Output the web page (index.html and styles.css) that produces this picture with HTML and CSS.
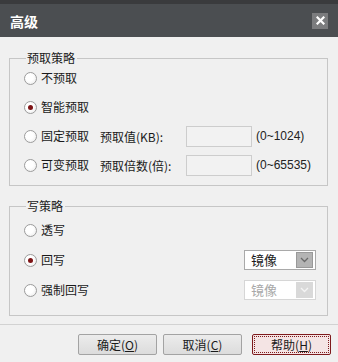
FILE: index.html
```html
<!DOCTYPE html>
<html>
<head>
<meta charset="utf-8">
<link rel="stylesheet" href="styles.css">
</head>
<body>
<div class="dialog">
  <div class="topstrip"></div>
  <div class="titlebar">
    <span class="title">高级</span>
    <span class="close"><svg width="9" height="9" viewBox="0 0 9 9"><path d="M1.5 1.5 L7.5 7.5 M7.5 1.5 L1.5 7.5" stroke="#fff" stroke-width="2.2" stroke-linecap="square"/></svg></span>
  </div>
  <div class="content">
    <fieldset class="group g1">
      <legend>预取策略</legend>
      <div class="row"><span class="radio"></span><span class="lbl">不预取</span></div>
      <div class="row"><span class="radio checked"></span><span class="lbl">智能预取</span></div>
      <div class="row"><span class="radio"></span><span class="lbl">固定预取</span><span class="field">预取值(KB):</span><span class="input"></span><span class="range">(0~1024)</span></div>
      <div class="row"><span class="radio"></span><span class="lbl">可变预取</span><span class="field">预取倍数(倍):</span><span class="input"></span><span class="range">(0~65535)</span></div>
    </fieldset>
    <fieldset class="group g2">
      <legend>写策略</legend>
      <div class="row"><span class="radio"></span><span class="lbl">透写</span></div>
      <div class="row"><span class="radio checked"></span><span class="lbl">回写</span><span class="select"><span class="stext">镜像</span><span class="arrow"><svg width="9" height="6" viewBox="0 0 9 6"><path d="M1 1 L4.5 4.5 L8 1" fill="none" stroke="#6a6a6a" stroke-width="1.3"/></svg></span></span></div>
      <div class="row"><span class="radio"></span><span class="lbl">强制回写</span><span class="select disabled"><span class="stext">镜像</span><span class="arrow"><svg width="9" height="6" viewBox="0 0 9 6"><path d="M1 1 L4.5 4.5 L8 1" fill="none" stroke="#f4f4f4" stroke-width="1.3"/></svg></span></span></div>
    </fieldset>
  </div>
  <div class="footer">
    <span class="btn">确定(<u>O</u>)</span>
    <span class="btn">取消(<u>C</u>)</span>
    <span class="btn focus"><span class="inner">帮助(<u>H</u>)</span></span>
  </div>
</div>
</body>
</html>
```
FILE: styles.css
```css
* { box-sizing: border-box; }
html, body { margin: 0; padding: 0; }
body {
  background: #f0f0f0;
  font-family: "Noto Sans CJK SC", "Liberation Sans", sans-serif;
  font-size: 12px;
  color: #1a1a1a;
}
.dialog { width: 338px; height: 362px; background: #f0f0f0; overflow: hidden; }
.topstrip { height: 4px; background: #3a3b3d; }
.titlebar {
  height: 33px;
  background: #4b4e51;
  display: flex;
  align-items: center;
  justify-content: space-between;
  padding: 0 10px 0 10px;
}
.title { color: #fff; font-weight: bold; font-size: 14px; line-height: 16px; }
.close {
  width: 16px; height: 16px;
  background: #7b7c7e;
  display: flex; align-items: center; justify-content: center;
}
.content { padding: 13px 10px 0 9px; }
.group {
  margin: 0;
  border: 1px solid #c6c6c6;
  padding: 1px 11px 9px 13px;
  display: flex;
  flex-direction: column;
  gap: 7px;
}
.group legend {
  padding: 0 2px 0 1px;
  margin-left: 3px;
  line-height: 16px;
  height: 16px;
  font-size: 12px;
}
.g2 { margin-top: 12px; padding-top: 5px; padding-bottom: 14px; gap: 8px; }
.row { display: flex; align-items: center; height: 22px; }
.radio {
  width: 13px; height: 13px;
  border-radius: 50%;
  border: 1px solid #9c9c9c;
  background: radial-gradient(circle at 40% 40%, #ffffff 40%, #e6e6e6 100%);
  margin-right: 4px;
  margin-left: 1px;
  flex: none;
  display: flex; align-items: center; justify-content: center;
}
.radio.checked::after {
  content: "";
  width: 5px; height: 5px;
  border-radius: 50%;
  background: #7d1416;
}
.lbl { width: 59px; flex: none; line-height: 16px; }
.g2 .lbl { flex: 1; }
.field { width: 86px; flex: none; }
.input {
  width: 66px; height: 21px;
  border: 1px solid #cdcdcd;
  background: #f2f2f2;
  flex: none;
}
.range { margin-left: 4px; font-family: "Liberation Sans", sans-serif; font-size: 12px; color: #222; }
.select {
  width: 72px; height: 20px;
  border: 1px solid #a9a9a9;
  background: #fff;
  display: flex; align-items: center; justify-content: space-between;
  padding: 1px 2px 1px 6px;
  flex: none;
}
.stext { font-size: 13px; line-height: 16px; }
.arrow {
  width: 17px; height: 16px;
  background: #b4b4b4;
  border: 1px solid #999;
  display: flex; align-items: center; justify-content: center;
}
.select.disabled { border-color: #d6d6d6; }
.select.disabled .stext { color: #a8a8a8; }
.select.disabled .arrow { background: #d9d9d9; border-color: #d9d9d9; }
.footer {
  margin-top: 8px;
  border-top: 1px solid #d2d2d2;
  display: flex;
  justify-content: flex-end;
  padding: 9px 7px 0 0;
  gap: 6px;
}
.btn {
  width: 79px; height: 21px;
  border: 1px solid #a3a3a3;
  border-radius: 2px;
  background: linear-gradient(#ececec, #dcdcdc);
  display: flex; align-items: center; justify-content: center;
  font-size: 12px;
  line-height: 16px;
}
.btn u { text-decoration: underline; text-underline-offset: 1px; }
.btn.focus {
  margin-left: 4px;
  border: 1px solid #7e1b1d;
  background: #f4e4e4;
  padding: 1px;
}
.btn.focus .inner {
  width: 100%; height: 100%;
  border: 1px dotted #7e1b1d;
  display: flex; align-items: center; justify-content: center;
}
```
